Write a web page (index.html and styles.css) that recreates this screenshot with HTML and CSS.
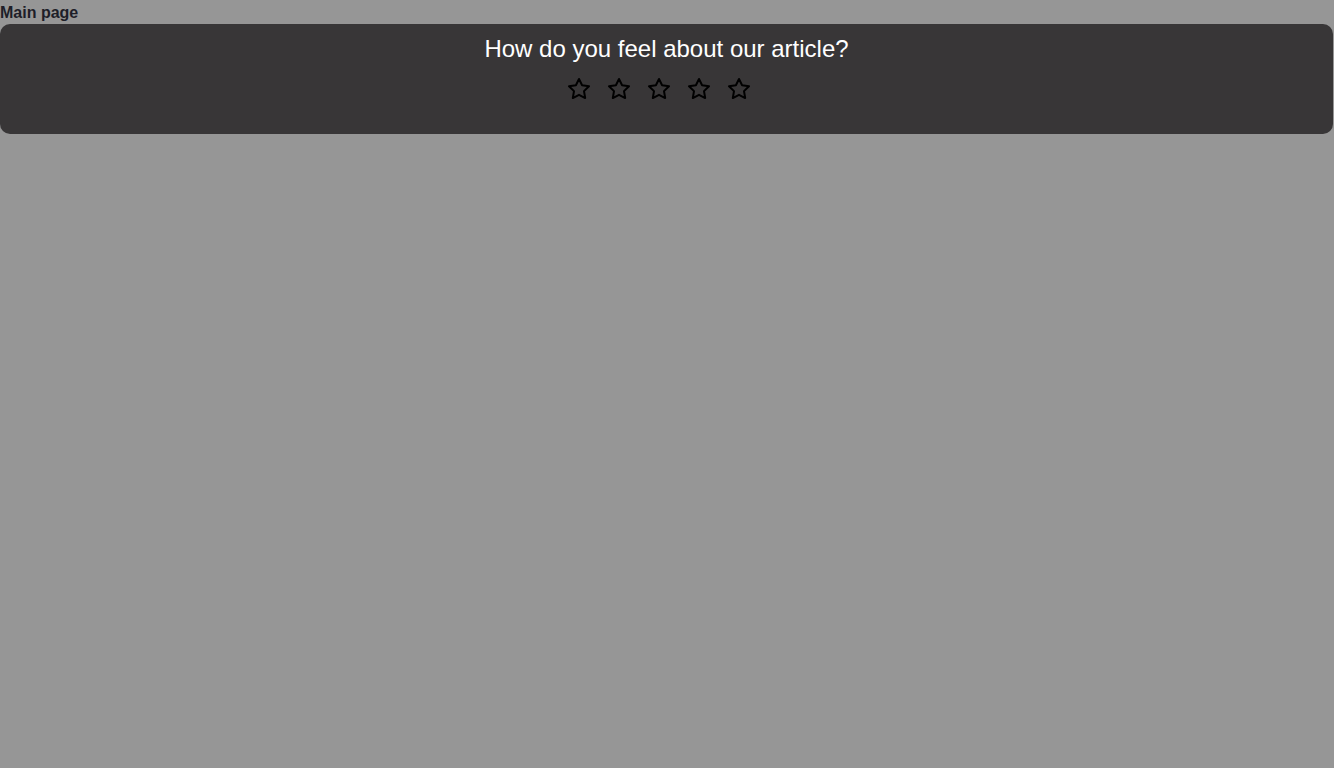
FILE: index.html
```html
<!DOCTYPE html>
<html lang="en">
<head>
<meta charset="utf-8">
<title>Main page</title>
<link rel="stylesheet" href="styles.css">
</head>
<body>
<div class="page">
  <div class="title">Main page</div>
  <div class="banner">
    <div class="question">How do you feel about our article?</div>
    <div class="stars">
      <svg class="star" viewBox="0 0 24 24" width="24" height="24"><polygon points="12 2 15.09 8.26 22 9.27 17 14.14 18.18 21.02 12 17.77 5.82 21.02 7 14.14 2 9.27 8.91 8.26 12 2"/></svg>
      <svg class="star" viewBox="0 0 24 24" width="24" height="24"><polygon points="12 2 15.09 8.26 22 9.27 17 14.14 18.18 21.02 12 17.77 5.82 21.02 7 14.14 2 9.27 8.91 8.26 12 2"/></svg>
      <svg class="star" viewBox="0 0 24 24" width="24" height="24"><polygon points="12 2 15.09 8.26 22 9.27 17 14.14 18.18 21.02 12 17.77 5.82 21.02 7 14.14 2 9.27 8.91 8.26 12 2"/></svg>
      <svg class="star" viewBox="0 0 24 24" width="24" height="24"><polygon points="12 2 15.09 8.26 22 9.27 17 14.14 18.18 21.02 12 17.77 5.82 21.02 7 14.14 2 9.27 8.91 8.26 12 2"/></svg>
      <svg class="star" viewBox="0 0 24 24" width="24" height="24"><polygon points="12 2 15.09 8.26 22 9.27 17 14.14 18.18 21.02 12 17.77 5.82 21.02 7 14.14 2 9.27 8.91 8.26 12 2"/></svg>
    </div>
  </div>
</div>
</body>
</html>
```

FILE: styles.css
```css
html, body {
  margin: 0;
  padding: 0;
  height: 100%;
}
body {
  background: #969696;
  font-family: "Liberation Sans", Arial, sans-serif;
}
.page {
  width: 1333px;
}
.title {
  font-weight: bold;
  font-size: 16px;
  line-height: 24px;
  height: 24px;
  padding-top: 1px;
  box-sizing: border-box;
  color: #1e1e28;
}
.banner {
  background: #383637;
  border-radius: 10px;
  padding: 11px 0 33px;
  display: flex;
  flex-direction: column;
  align-items: center;
}
.question {
  color: #ffffff;
  font-size: 24px;
  line-height: 27px;
  margin-bottom: 15px;
}
.stars {
  display: flex;
}
.star {
  display: block;
  margin-right: 16px;
  fill: none;
  stroke: #000000;
  stroke-width: 2;
  stroke-linejoin: round;
  stroke-linecap: round;
}
```
